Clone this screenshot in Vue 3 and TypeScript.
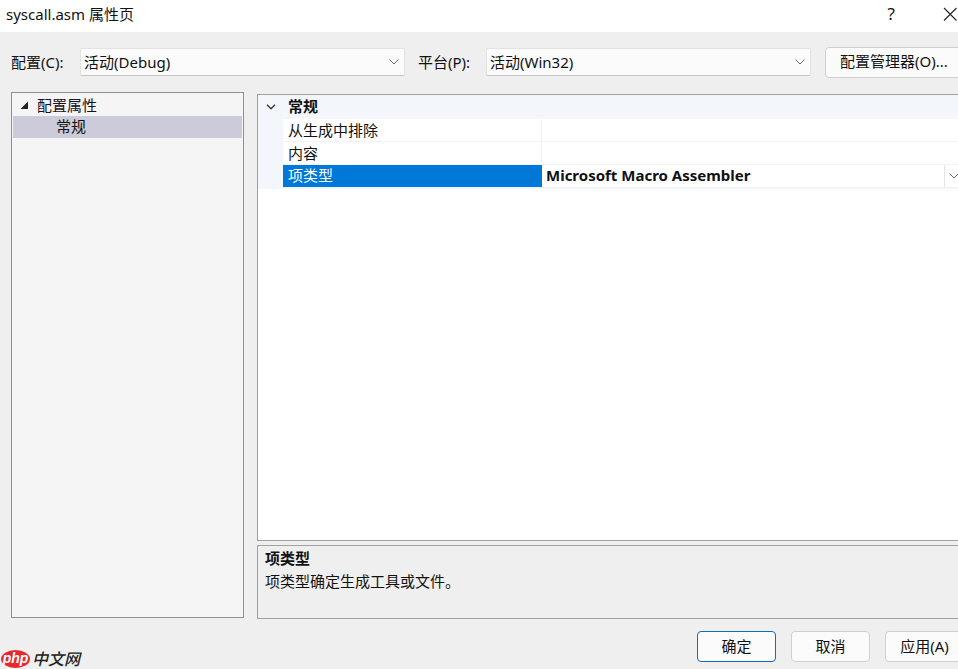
<script setup lang="ts">
const rows = [
  { name: '从生成中排除', value: '', selected: false },
  { name: '内容', value: '', selected: false },
  { name: '项类型', value: 'Microsoft Macro Assembler', selected: true },
]
</script>

<template>
  <div class="dialog">
    <header class="titlebar">
      <span class="title">syscall.asm 属性页</span>
      <span class="help">?</span>
      <svg class="close" width="14" height="14" viewBox="0 0 14 14"><path d="M1 1 13.500 13.500M13.500 1 1 13.500" stroke="#222" stroke-width="1.1" fill="none" /></svg>
    </header>

    <div class="toolbar">
      <label class="tlabel first">配置(C):</label>
      <div class="combo">
        <span>活动(Debug)</span>
        <svg width="10" height="6" viewBox="0 0 10 6"><path d="M.5.5 5 5 9.500.5" stroke="#666" fill="none" /></svg>
      </div>
      <label class="tlabel second">平台(P):</label>
      <div class="combo">
        <span>活动(Win32)</span>
        <svg width="10" height="6" viewBox="0 0 10 6"><path d="M.5.5 5 5 9.500.5" stroke="#666" fill="none" /></svg>
      </div>
      <button class="btn manager">配置管理器(O)...</button>
    </div>

    <div class="main">
      <aside class="tree">
        <div class="tree-root">
          <svg width="10" height="10" viewBox="0 0 10 10"><path d="M9 1.500V9H1.500z" fill="#222" /></svg>
          <span>配置属性</span>
        </div>
        <div class="tree-child">常规</div>
      </aside>

      <section class="right">
        <div class="grid">
          <div class="group">
            <svg width="10" height="6" viewBox="0 0 10 6"><path d="M1 .8l4 4 4-4" stroke="#333" stroke-width="1.300" fill="none" /></svg>
            <span>常规</span>
          </div>
          <div class="rows">
            <div v-for="r in rows" :key="r.name" class="row">
              <div class="cell-name" :class="{ selected: r.selected }">{{ r.name }}</div>
              <div class="cell-value">
                <span>{{ r.value }}</span>
                <div v-if="r.selected" class="drop">
                  <svg width="10" height="6" viewBox="0 0 10 6"><path d="M.5.5 5 5 9.500.5" stroke="#666" fill="none" /></svg>
                </div>
              </div>
            </div>
          </div>
        </div>
        <div class="desc">
          <div class="desc-title">项类型</div>
          <div class="desc-text">项类型确定生成工具或文件。</div>
        </div>
      </section>
    </div>

    <footer class="footer">
      <div class="logo">
        <span class="php">php</span>
        <span class="cn">中文网</span>
      </div>
      <button class="btn action primary">确定</button>
      <button class="btn action">取消</button>
      <button class="btn action">应用(A)</button>
    </footer>
  </div>
</template>

<style>
html, body { margin: 0; background: #efefef; overflow: hidden; }
</style>

<style scoped>
.dialog {
  width: 958px;
  height: 669px;
  overflow: hidden;
  background: #efefef;
  color: #111;
  font-family: "Noto Sans", "Noto Sans CJK SC", sans-serif;
  font-size: 15px;
  display: flex;
  flex-direction: column;
}
.titlebar {
  height: 32px;
  flex: none;
  background: #fff;
  display: flex;
  align-items: center;
  padding-left: 6px;
  position: relative;
}
.title { font-size: 15px; flex: 1; margin-top: -6px; }
.help { margin-right: 48px; font-size: 17px; margin-top: -6px; }
.close { margin-right: 1px; margin-top: -4px; flex: none; }
.toolbar {
  height: 60px;
  flex: none;
  display: flex;
  align-items: center;
  box-sizing: border-box;
  line-height: 20px;
}
.tlabel { white-space: nowrap; flex: none; }
.first { width: 69px; margin-left: 11px; }
.second { width: 68px; margin-left: 13px; }
.combo {
  width: 325px;
  height: 28px;
  box-sizing: border-box;
  flex: none;
  background: #fbfbfb;
  border: 1px solid #e2e2e2;
  border-bottom-color: #c4c4c4;
  border-radius: 2px;
  display: flex;
  align-items: center;
  justify-content: space-between;
  padding: 0 5px 0 3px;
}
.btn {
  font: inherit;
  color: #111;
  background: #fbfbfb;
  border: 1px solid #d0d0d0;
  border-radius: 4px;
  padding: 0 0 2px;
  box-sizing: border-box;
  flex: none;
  line-height: 20px;
}
.manager { width: 140px; height: 31px; margin-left: 14px; text-align: left; padding-left: 14px; white-space: nowrap; }
.main {
  height: 526px;
  flex: none;
  display: flex;
  align-items: flex-start;
}
.tree {
  width: 233px;
  height: 526px;
  box-sizing: border-box;
  margin-left: 11px;
  background: #f5f5f5;
  border: 1px solid #8c8f94;
  padding: 1px;
  flex: none;
}
.tree-root {
  height: 22px;
  line-height: 20px;
  display: flex;
  align-items: center;
  gap: 8px;
  padding-left: 6px;
  color: #1a1020;
}
.tree-child {
  height: 22px;
  line-height: 21px;
  padding-left: 43px;
  background: #cbcbd9;
}
.right {
  margin-left: 13px;
  width: 720px;
  flex: none;
  padding-top: 2px;
}
.grid {
  height: 447px;
  box-sizing: border-box;
  background: #fff;
  border: 1px solid #a0a0a0;
  border-right: none;
}
.group {
  height: 24px;
  line-height: 22px;
  background: #f3f6fb;
  display: flex;
  align-items: center;
  gap: 12px;
  padding-left: 8px;
  font-weight: 700;
}
.group span { margin-top: -2px; }
.rows { background: #f3f6fb; padding-left: 25px; padding-bottom: 1px; }
.row { display: flex; height: 23px; background: #fff; border-bottom: 1px solid #f1f4fa; box-sizing: border-box; }
.row:last-child { border-bottom: 1px solid #eef1f6; }
.cell-name {
  width: 259px;
  flex: none;
  padding-left: 5px;
  box-sizing: border-box;
  line-height: 22px;
  border-right: 1px solid #f1f4fa;
}
.cell-name.selected { background: #0078d7; color: #fff; border-right: none; line-height: 21px; }
.cell-value {
  flex: 1;
  display: flex;
  align-items: center;
  padding-left: 4px;
  padding-bottom: 2px;
  box-sizing: border-box;
  font-weight: 700;
  font-size: 15px;
  line-height: 20px;
  position: relative;
}
.drop {
  position: absolute;
  left: 402px;
  top: 0;
  width: 20px;
  height: 22px;
  border-left: 1px solid #e4e4e4;
  display: flex;
  align-items: center;
  padding-left: 4px;
  box-sizing: border-box;
  background: #fff;
}
.desc {
  height: 74px;
  margin-top: 4px;
  box-sizing: border-box;
  border: 1px solid #a0a0a0;
  border-right: none;
  padding: 1px 7px;
  line-height: 22px;
}
.desc-title { font-weight: 700; }
.desc-text { margin-top: 1px; }
.footer {
  flex: 1;
  display: flex;
  align-items: flex-start;
  padding-top: 13px;
  position: relative;
}
.action { width: 79px; height: 31px; margin-right: 15px; white-space: nowrap; }
.primary { margin-left: 697px; border: 1px solid #0f6cbd; }
.logo {
  position: absolute;
  left: 1px;
  bottom: 1px;
  display: flex;
  align-items: center;
  gap: 2px;
}
.php {
  display: block;
  width: 29px;
  height: 18px;
  border-radius: 50%;
  background: #e8292b;
  color: #fff;
  font: italic 700 14px/16px "Liberation Sans", sans-serif;
  text-align: center;
}
.cn {
  font-size: 16px;
  font-weight: 500;
  font-style: italic;
  line-height: 18px;
  color: #222;
}
</style>
